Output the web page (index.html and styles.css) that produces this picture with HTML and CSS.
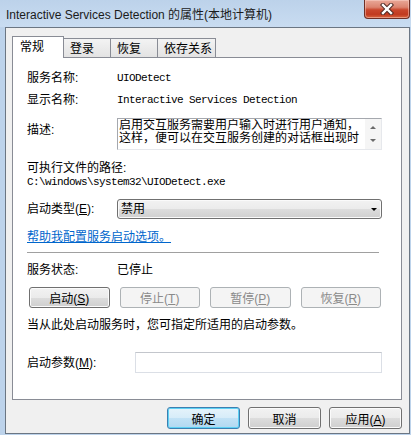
FILE: index.html
```html
<!DOCTYPE html>
<html lang="zh-CN">
<head>
    <meta charset="UTF-8">
    <meta name="viewport" content="width=device-width, initial-scale=1.0">
    <title>Interactive Services Detection 的属性(本地计算机)</title>
    <link rel="stylesheet" href="styles.css">
</head>
<body>
    <div class="window">
        <div class="titlebar">
            <span class="title">Interactive Services Detection 的属性(本地计算机)</span>
            <div class="close-btn">
                <svg width="14" height="12" viewBox="0 0 14 12">
                    <path d="M3 2 L11 10 M11 2 L3 10" stroke="#4e2a24" stroke-width="4.4" stroke-linecap="square" fill="none"/>
                    <path d="M3 2 L11 10 M11 2 L3 10" stroke="#ffffff" stroke-width="2.4" stroke-linecap="square" fill="none"/>
                </svg>
            </div>
        </div>
        <div class="client">
            <div class="tabs">
                <div class="tab active">常规</div>
                <div class="tab">登录</div>
                <div class="tab">恢复</div>
                <div class="tab wide">依存关系</div>
            </div>
            <div class="panel">
                <div class="row r-name">
                    <span class="label">服务名称:</span>
                    <span class="mono">UIODetect</span>
                </div>
                <div class="row r-display">
                    <span class="label">显示名称:</span>
                    <span class="mono">Interactive Services Detection</span>
                </div>
                <div class="row r-desc">
                    <span class="label">描述:</span>
                    <div class="desc-box">
                        <div class="desc-text">
                            <div>启用交互服务需要用户输入时进行用户通知，</div>
                            <div>这样，便可以在交互服务创建的对话框出现时</div>
                        </div>
                        <div class="scroll">
                            <span class="arr up"></span>
                            <span class="arr down"></span>
                        </div>
                    </div>
                </div>
                <div class="path-label">可执行文件的路径:</div>
                <div class="mono path">C:\windows\system32\UIODetect.exe</div>
                <div class="row r-type">
                    <span class="label">启动类型(<u>E</u>):</span>
                    <div class="combo"><span>禁用</span><span class="caret"></span></div>
                </div>
                <a class="help" href="#">帮助我配置服务启动选项。</a>
                <div class="sep"></div>
                <div class="row r-status">
                    <span class="label">服务状态:</span>
                    <span>已停止</span>
                </div>
                <div class="svc-buttons">
                    <button class="btn">启动(<u>S</u>)</button>
                    <button class="btn" disabled>停止(<u>T</u>)</button>
                    <button class="btn" disabled>暂停(<u>P</u>)</button>
                    <button class="btn" disabled>恢复(<u>R</u>)</button>
                </div>
                <div class="note">当从此处启动服务时，您可指定所适用的启动参数。</div>
                <div class="row r-param">
                    <span class="label wide-label">启动参数(<u>M</u>):</span>
                    <div class="param-input"></div>
                </div>
            </div>
            <div class="dlg-buttons">
                <button class="btn default">确定</button>
                <button class="btn">取消</button>
                <button class="btn">应用(<u>A</u>)</button>
            </div>
        </div>
    </div>
</body>
</html>
```

FILE: styles.css
```css
* {
    box-sizing: border-box;
}
html, body {
    margin: 0;
}
body {
    width: 411px;
    height: 435px;
    overflow: hidden;
    background: #bdd3eb;
    font-family: "Liberation Sans", "Noto Sans CJK SC", sans-serif;
    font-size: 12px;
    color: #000;
}
.titlebar {
    height: 27px;
    display: flex;
    align-items: flex-start;
    background: linear-gradient(to bottom, #bcd2ea, #c9dcf1);
}
.title {
    padding: 8px 0 0 6px;
    line-height: 14px;
    color: #1b1b1b;
}
.close-btn {
    margin-left: auto;
    margin-right: 1px;
    width: 46px;
    height: 19px;
    border: 1px solid #6e2f26;
    border-top: none;
    border-radius: 0 0 4px 4px;
    background: linear-gradient(to bottom, #e9a898 0%, #dc8470 40%, #c9462c 55%, #c13a20 80%, #d9653f 100%);
    box-shadow: inset 0 0 0 1px rgba(255, 220, 210, 0.45);
    display: flex;
    align-items: center;
    justify-content: center;
}
.client {
    margin: 0 1px 0 5px;
    height: 407px;
    border: 1px solid #6b7683;
    background: #f0f0f0;
}
.tabs {
    display: flex;
    align-items: flex-end;
    height: 29px;
    padding: 8px 0 0 6px;
}
.tab {
    position: relative;
    height: 19px;
    width: 48px;
    margin-left: -1px;
    padding: 3px 0 0 6px;
    line-height: 14px;
    border: 1px solid #898c95;
    border-bottom: none;
    background: linear-gradient(to bottom, #f3f3f3, #e3e3e3);
}
.tab.active {
    z-index: 1;
    width: 52px;
    height: 22px;
    margin-left: 0;
    margin-bottom: -1px;
    padding: 3px 0 0 7px;
    background: #fff;
}
.tab.wide {
    width: 59px;
}
.panel {
    height: 343px;
    margin: 0 7px 0 6px;
    padding: 13px 19px 0 14px;
    border: 1px solid #898c95;
    background: #fff;
}
.row {
    display: flex;
    align-items: center;
    line-height: 14px;
}
.label {
    flex: none;
    width: 90px;
}
.wide-label {
    width: 108px;
}
.mono {
    font-family: "Liberation Mono", monospace;
    font-size: 11px;
    letter-spacing: -0.6px;
}
.r-display {
    margin-top: 8px;
}
.r-desc {
    margin-top: 11px;
    height: 32px;
    align-items: flex-start;
}
.r-desc .label {
    padding-top: 5px;
}
.desc-box {
    flex: 1;
    height: 32px;
    display: flex;
    border-top: 1px solid #a5a8ae;
    border-left: 1px solid #a5a8ae;
    border-right: 1px solid #e6e8ec;
    border-bottom: 1px solid #e6e8ec;
}
.desc-text {
    flex: 1;
    padding: 0 0 0 1px;
    line-height: 13px;
    white-space: nowrap;
    overflow: hidden;
}
.scroll {
    width: 16px;
    background: #f5f5f5;
    display: flex;
    flex-direction: column;
    align-items: center;
    justify-content: space-between;
    padding: 7px 0 7px;
}
.arr {
    width: 0;
    height: 0;
    border-left: 3px solid transparent;
    border-right: 3px solid transparent;
}
.arr.up {
    border-bottom: 3px solid #6a6a6a;
}
.arr.down {
    border-top: 3px solid #6a6a6a;
}
.path-label {
    margin-top: 11px;
    line-height: 14px;
}
.path {
    line-height: 14px;
}
.r-type {
    margin-top: 10px;
    height: 20px;
}
.combo {
    flex: 1;
    height: 20px;
    display: flex;
    align-items: center;
    padding-left: 3px;
    border: 1px solid #707070;
    border-radius: 3px;
    background: linear-gradient(to bottom, #f2f2f2 0%, #ebebeb 50%, #dddddd 50%, #cfcfcf 100%);
    box-shadow: inset 0 0 0 1px #fafafa;
}
.caret {
    margin-left: auto;
    margin-right: 4px;
    width: 0;
    height: 0;
    border-left: 3px solid transparent;
    border-right: 3px solid transparent;
    border-top: 3px solid #000;
}
.help {
    display: block;
    width: fit-content;
    margin-top: 11px;
    line-height: 14px;
    color: #0066cc;
    text-decoration: underline;
}
.sep {
    margin: 8px 3px 0 0;
    height: 1px;
    background: #a0a0a0;
}
.r-status {
    margin-top: 10px;
}
.svc-buttons {
    display: grid;
    grid-template-columns: repeat(4, 1fr);
    gap: 10px;
    height: 21px;
    margin: 10px 1px 0 2px;
}
.btn {
    height: 100%;
    padding: 0;
    font: inherit;
    color: #000;
    border: 1px solid #707070;
    border-radius: 3px;
    background: linear-gradient(to bottom, #f2f2f2 0%, #ebebeb 50%, #dddddd 50%, #cfcfcf 100%);
    box-shadow: inset 0 0 0 1px #fbfbfb;
}
.btn:disabled {
    color: #8a8a8a;
    border-color: #adb2b5;
    background: #f4f4f4;
    box-shadow: none;
}
.note {
    margin-top: 10px;
    line-height: 14px;
}
.r-param {
    margin-top: 20px;
    height: 21px;
}
.param-input {
    flex: 1;
    height: 21px;
    border: 1px solid #dbdfe6;
    border-top-color: #c3c6cc;
    background: #fff;
}
.dlg-buttons {
    display: flex;
    justify-content: flex-end;
    gap: 8px;
    height: 22px;
    margin-top: 7px;
    padding-right: 7px;
}
.dlg-buttons .btn {
    width: 73px;
}
.btn.default {
    border-color: #3c7fb1;
    background: linear-gradient(to bottom, #e5f3fb 0%, #d6ecf9 50%, #c2e2f6 50%, #b1d8f1 100%);
    box-shadow: inset 0 0 0 1px #5ed1f4;
}
```
